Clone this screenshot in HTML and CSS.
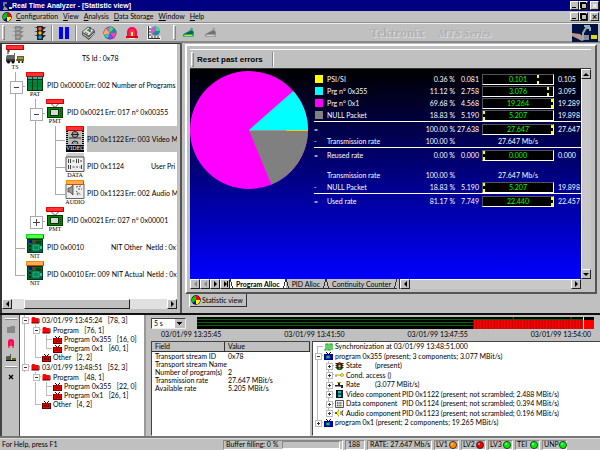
FILE: index.html
```html
<!DOCTYPE html>
<html lang="en">
<head>
<meta charset="utf-8">
<title>Real Time Analyzer - [Statistic view]</title>
<link rel="stylesheet" href="styles.css">
</head>
<body>
<svg class="defs" aria-hidden="true">
  <symbol id="wheel" viewBox="0 0 10 10"><circle cx="5" cy="5" r="4.7" fill="#000"/><path d="M5 5V.8A4.2 4.2 0 0 1 9.2 5z" fill="#f00"/><path d="M5 5H9.2A4.2 4.2 0 0 1 5 9.200z" fill="#ff0"/><path d="M5 5V9.200A4.200 4.200 0 0 1 2 8z" fill="#00f"/><path d="M5 5L2 8A4.200 4.200 0 0 1 5 .8z" fill="#0c0"/></symbol>
  <symbol id="folder" viewBox="0 0 8 8"><path d="M0 2L1 1H3L4 2H7V7H0z" fill="#f00"/><path d="M0 7H7.500V2.500" fill="none" stroke="#500" stroke-width="1"/></symbol>
  <symbol id="redtv" viewBox="0 0 9 8"><path d="M2 0L4.500 2.500L7 0" fill="none" stroke="#300"/><path d="M0 2H9V8H0z" fill="#600"/><path d="M1 2.500H8V7H1z" fill="#e00"/><path d="M2 3.500H5.500V6H2z" fill="#800"/><path d="M6.500 3.500V6" stroke="#400"/></symbol>
  <symbol id="bluetv" viewBox="0 0 9 8"><path d="M2 0L4.500 2.500L7 0" fill="none" stroke="#000"/><path d="M0 2H9V8H0z" fill="#008"/><path d="M1 3H8V7H1z" fill="#00c"/><path d="M2 3.500H6V6.500H2z" fill="#088"/><path d="M3 4.200H5V5.800H3z" fill="#3d3"/></symbol>
  <symbol id="pmt" viewBox="0 0 20 19"><path d="M6.500 5L10 8.500L13.500 5" fill="#fff" stroke="#555"/><path d="M2 8H18V19H2z" fill="#030"/><path d="M3 9H17V18H3z" fill="#080"/><path d="M5 10H14V17H5z" fill="#030"/><path d="M6 11H13V16H6z" fill="#d8d8d8"/><path d="M15.500 10V17" stroke="#040" stroke-dasharray="1 1"/></symbol>
  <symbol id="pat" viewBox="0 0 20 19"><path d="M2 5H18V19H2z" fill="#030"/><path d="M3 5H17V7H3z" fill="#0cc"/><path d="M3 8H17V18H3z" fill="#084"/><path d="M7.500 5V19M12.500 5V19" stroke="#030"/><path d="M3 11H17M3 14H17" stroke="#052" stroke-width=".5"/></symbol>
  <symbol id="nit" viewBox="0 0 20 19"><path d="M2 5H18V19H2z" fill="#032"/><path d="M3 6H17V18H3z" fill="#063"/><path d="M8 11H14V16H8z" fill="#085" stroke="#3ba" stroke-width=".8"/><path d="M4 6H7V9H4z" fill="#00c"/><path d="M8 6H10V8H8z" fill="#f00"/><path d="M11 7H16V10H11z" fill="#041"/><path d="M4 11H6V13H4zM4 15H6V17H4z" fill="#021"/><path d="M15 12H17V15H15z" fill="#4b8"/></symbol>
  <symbol id="dish" viewBox="0 0 12 12"><path d="M1 7L5 5L8 3L10 5V7z" fill="#065"/><path d="M8 1L6 5L10 3z" fill="#4a8"/><path d="M1 7H10V9H1z" fill="#084"/><path d="M2 8H9" stroke="#af5"/></symbol>
  <symbol id="light" viewBox="0 0 12 14"><path d="M0 1H12L9 4zM0 5H12L9 8zM0 9H12L9 12z"/><path d="M3 0H9V14H3z"/></symbol>
  <symbol id="led" viewBox="0 0 8 8"><circle cx="4" cy="4" r="3.600" stroke="#222" stroke-width=".8"/><circle cx="3" cy="3" r="1" fill="#fff" opacity=".6"/></symbol>
</svg>

<header class="titlebar">
  <svg class="ico" viewBox="0 0 10 10"><path d="M1 1H5V3H3V5H1z" fill="#777"/><path d="M2 5L5 7L6 9H1z" fill="#998"/><path d="M7 6H10V8H7z" fill="#ee0"/></svg>
  <h1>Real Time Analyzer - [Statistic view]</h1>
  <div class="winbtns"><button class="btn min" aria-label="Minimize"></button><button class="btn res" aria-label="Restore"></button><button class="btn cls" aria-label="Close">×</button></div>
</header>
<nav class="menubar">
  <svg class="ico"><use href="#wheel"/></svg>
  <a href="#"><u>C</u>onfiguration</a><a href="#"><u>V</u>iew</a><a href="#"><u>A</u>nalysis</a><a href="#"><u>D</u>ata Storage</a><a href="#"><u>W</u>indow</a><a href="#"><u>H</u>elp</a>
  <div class="winbtns"><button class="btn min" aria-label="Minimize view"></button><button class="btn res" aria-label="Restore view"></button><button class="btn cls" aria-label="Close view">×</button></div>
</nav>
<div class="toolbar">
  <span class="grip"></span>
  <button class="tool" aria-label="Stop"><svg viewBox="0 0 12 14" fill="#888"><use href="#light"/><path d="M4.500 2H7.500V4H4.500zM4.500 6H7.500V8H4.500zM4.500 10H7.500V12H4.500z" fill="#aaa"/></svg></button>
  <button class="tool" aria-label="Start"><svg viewBox="0 0 12 14" fill="#222"><use href="#light"/><circle cx="6" cy="2.800" r="1.700" fill="#f53"/><circle cx="6" cy="7" r="1.700" fill="#fb0"/><circle cx="6" cy="11.200" r="1.700" fill="#0af"/></svg></button>
  <span class="sep"></span>
  <button class="tool" aria-label="Pause"><svg viewBox="0 0 12 14"><path d="M1 1H5V13H1zM7 1H11V13H7z" fill="#00f"/></svg></button>
  <span class="sep"></span>
  <button class="tool" aria-label="Report"><svg viewBox="0 0 14 14"><path d="M1 9L8 14L14 7V4L8 10L1 6z" fill="#555"/><path d="M1 6L7 1L13 4L8 10z" fill="#ddd" stroke="#444" stroke-width=".8"/><path d="M4 6L7 8M6 4L10 6M7 3L9 6" stroke="#384"/><path d="M9 1V5" stroke="#222"/><path d="M2 8L8 12L13 7" fill="none" stroke="#eee" stroke-width=".7"/></svg></button>
  <button class="tool" aria-label="Statistics"><svg viewBox="0 0 14 14"><circle cx="7" cy="7" r="6.500" fill="#345"/><path d="M7 7V1A6 6 0 0 1 11 2.500z" fill="#4d8"/><path d="M7 7L11 2.500A6 6 0 0 1 13 7z" fill="#28a"/><path d="M7 7H13A6 6 0 0 1 10.500 12z" fill="#f4a"/><path d="M7 7L10.500 12A6 6 0 0 1 5 12.600z" fill="#93f"/><path d="M7 7L5 12.600A6 6 0 0 1 1.300 9z" fill="#2cc"/><path d="M7 7L1.300 9A6 6 0 0 1 3 2.500z" fill="#fa6"/><path d="M7 7L3 2.500A6 6 0 0 1 7 1z" fill="#c6c"/></svg></button>
  <button class="tool" aria-label="Alarm"><svg viewBox="0 0 14 14"><path d="M2 11V6A5 5 0 0 1 12 6V11z" fill="#f06"/><path d="M4 10V6A3 3 0 0 1 10 6V10z" fill="#f33"/><path d="M6 6H8V10H6z" fill="#ff8"/><path d="M1 10H13V12H1z" fill="#d00"/><path d="M4 12.500H10" stroke="#eee"/></svg></button>
  <button class="tool" aria-label="Graph"><svg viewBox="0 0 14 14"><path d="M0 0H4V10H14V14H0z" fill="#eee"/><path d="M1.500 0V12.500H13" fill="none" stroke="#333"/><path d="M2 3H4M2 6H4M2 9H4M5 12V10M8 12V10M11 12V10" stroke="#333"/><circle cx="8.500" cy="5" r="4.500" fill="#28a"/><path d="M8.500 5V.5A4.500 4.500 0 0 1 13 5z" fill="#4d8"/><path d="M8.500 5L5 8A4.500 4.500 0 0 1 5 2z" fill="#e5b"/><path d="M8.500 5L5 2A4.500 4.500 0 0 1 8.500 .5z" fill="#96f"/></svg></button>
  <span class="grip wide"></span>
  <button class="tool" aria-label="Connect"><svg><use href="#dish"/></svg></button>
  <button class="tool off" aria-label="Disconnect"><svg><use href="#dish"/></svg></button>
  <span class="brand">Tektronix</span><span class="brand series">MTS Series</span>
  <svg class="logo" viewBox="0 0 26 18"><path d="M0 0H26V18H0z" fill="#014"/><path d="M0 9L8 10L14 15L10 17L0 12z" fill="#b98"/><path d="M11 16V9L14 4H18V7M18 2H12" fill="none" stroke="#9aa" stroke-width="2"/><path d="M12 11H17V16H12z" fill="#889"/><path d="M19 11H25V15H19z" fill="#dd1"/></svg>
</div>

<main class="work">
  <section class="streams">
    <ul class="pids">
      <li><span class="node"><i class="bar red"></i><svg viewBox="0 0 20 19"><path d="M2 10H9V8H10V17H1V12z" fill="#666"/><path d="M3 5V9M3 6H5M1 15H10" stroke="#111"/><path d="M11 15H13" stroke="#000"/><path d="M12 11H19V16H12z" fill="#660"/><path d="M13 12H18V14H13z" fill="#996"/><circle cx="3.500" cy="17" r="1.500"/><circle cx="8" cy="17" r="1.500"/><circle cx="14" cy="17" r="1"/><circle cx="17.500" cy="17" r="1"/></svg><b>TS</b></span><span class="pid ts">TS Id : 0x78</span></li>
      <li><i class="c t x"></i><span class="node"><i class="bar red"></i><svg><use href="#pat"/></svg><b>PAT</b></span><span class="pid">PID 0x0000</span><span>Err: 002</span><span>Number of Programs : 00</span></li>
      <li><i class="c v"></i><i class="c t x"></i><span class="node"><i class="bar red"></i><svg><use href="#pmt"/></svg><b>PMT</b></span><span class="pid">PID 0x0021</span><span>Err: 017</span><span>n° 0x00355</span></li>
      <li><i class="c v"></i><i class="c v"></i><i class="c t"></i><span class="node"><i class="bar red"></i><svg viewBox="0 0 20 19"><path d="M1 5H19V19H1z" fill="#bbb"/><path d="M2 5V19M18 5V19" stroke="#000" stroke-width="2" stroke-dasharray="1 1"/><path d="M4 12H16" stroke="#333"/><circle cx="10" cy="8.500" r="3" fill="#999" stroke="#222"/><path d="M7 18A3 3 0 0 1 13 18" fill="#999" stroke="#222"/><path d="M6 8.500H14" stroke="#222"/></svg><b class="inv">VIDEO</b></span><span class="sel"><span class="pid">PID 0x1122</span><span>Err: 003</span><span class="kind">Video M</span></span></li>
      <li><i class="c v"></i><i class="c v"></i><i class="c t"></i><span class="node"><svg viewBox="0 0 20 19"><path d="M1 2L3 0H19V18H1z" fill="#ccc"/><path d="M1 4H19V18.500H1z" fill="#eee" stroke="#555"/><path d="M3.500 6V10M5.500 6V10M7.500 8H9.500M11.500 6V10M13.500 6V10M15 8H17M3.500 12V16M5.500 12V16M7.500 14H9.500M11 14H13M14.500 14H15.500M16.500 12V16" stroke="#444"/></svg><b>DATA</b></span><span class="pid">PID 0x1124</span><span></span><span class="kind">User Pri</span></li>
      <li><i class="c v"></i><i class="c v"></i><i class="c l"></i><span class="node"><i class="bar org"></i><svg viewBox="0 0 20 19"><path d="M1 4H19V18.500H1z" fill="#eee" stroke="#666"/><path d="M3 8H5L8 5V15L5 12H3z" fill="#999" stroke="#333" stroke-width=".7"/><path d="M11 7L16 6M11 11L16 15M13 9H17M12 13L13 16" stroke="#555" stroke-dasharray="2 1"/></svg><b>AUDIO</b></span><span class="pid">PID 0x1123</span><span>Err: 002</span><span class="kind">Audio M</span></li>
      <li><i class="c v"></i><i class="c l x plus"></i><span class="node"><i class="bar red"></i><svg><use href="#pmt"/></svg><b>PMT</b></span><span class="pid">PID 0x0021</span><span>Err: 027</span><span>n° 0x00001</span></li>
      <li><i class="c t"></i><span class="node"><i class="bar grn"></i><svg><use href="#nit"/></svg><b>NIT</b></span><span class="pid">PID 0x0010</span><span></span><span class="net">NIT Other</span><span>NetId : 0x1</span></li>
      <li><i class="c l"></i><span class="node"><i class="bar org"></i><svg><use href="#nit"/></svg><b>NIT</b></span><span class="pid">PID 0x0010</span><span>Err: 009</span><span class="net">NIT Actual</span><span>NetId : 0x1</span></li>
    </ul>
    <div class="hscroll"><button class="btn la" aria-label="Scroll left"></button><span class="track"><i class="thumb"></i></span><button class="btn ra" aria-label="Scroll right"></button></div>
  </section>

  <section class="stat">
    <div class="mdi">
      <div class="actions"><span class="grip"></span><button class="reset">Reset past errors</button></div>
      <div class="view">
        <div class="canvas">
          <svg class="pie" viewBox="0 0 118 118"><circle cx="59" cy="59" r="59" fill="#f0f"/><path d="M59 59L81.300 113.600A59 59 0 0 0 118 59z" fill="#808080"/><path d="M59 59H118A59 59 0 0 0 103.300 20z" fill="#0ff"/><path d="M59 59.500H97" stroke="#999"/><path d="M96 59.500H118" stroke="#fc0"/></svg>
          <table class="rates">
            <colgroup><col class="c1"><col><col class="c3"><col class="c4"><col class="c5"><col class="c6"></colgroup>
            <tbody>
              <tr><td><i class="sw yel"></i></td><th>PSI/SI</th><td>0.36 %</td><td>0.081</td><td><span class="gauge g80">0.101</span></td><td>0.105</td></tr>
              <tr><td><i class="sw cya"></i></td><th>Prg n° 0x355</th><td>11.12 %</td><td>2.758</td><td><span class="gauge g93">3.076</span></td><td>3.095</td></tr>
              <tr><td><i class="sw mag"></i></td><th>Prg n° 0x1</th><td>69.68 %</td><td>4.568</td><td><span class="gauge g100">19.264</span></td><td>19.289</td></tr>
              <tr><td><i class="sw gry"></i></td><th>NULL Packet</th><td>18.83 %</td><td>5.190</td><td><span class="gauge g0">5.207</span></td><td>19.898</td></tr>
            </tbody>
            <tbody>
              <tr><td>=</td><th></th><td>100.00 %</td><td>27.638</td><td><span class="gauge g100">27.647</span></td><td>27.647</td></tr>
              <tr><td>-</td><th>Transmission rate</th><td>100.00 %</td><td></td><td class="mid">27.647 Mb/s</td><td></td></tr>
            </tbody>
            <tbody>
              <tr><td>=</td><th>Reused rate</th><td>0.00 %</td><td>0.000</td><td><span class="gauge g0">0.000</span></td><td>0.000</td></tr>
              <tr class="gap"><td></td><th>Transmission rate</th><td>100.00 %</td><td></td><td class="mid">27.647 Mb/s</td><td></td></tr>
              <tr><td>-</td><th>NULL Packet</th><td>18.83 %</td><td>5.190</td><td><span class="gauge g0">5.207</span></td><td>19.898</td></tr>
            </tbody>
            <tbody>
              <tr><td>=</td><th>Used rate</th><td>81.17 %</td><td>7.749</td><td><span class="gauge g100">22.440</span></td><td>22.457</td></tr>
            </tbody>
          </table>
        </div>
        <div class="vscroll"><button class="btn ua" aria-label="Scroll up"></button><span class="track"></span><button class="btn da" aria-label="Scroll down"></button></div>
      </div>
      <div class="sheets">
        <button class="btn la dim" aria-label="First sheet"></button><button class="btn la dim" aria-label="Previous sheet"></button><button class="btn ra" aria-label="Next sheet"></button><button class="btn ra last" aria-label="Last sheet"></button>
        <div class="tabs"><a href="#" class="on">Program Alloc</a><a href="#">PID Alloc</a><a href="#">Continuity Counter</a></div>
        <div class="hscroll"><button class="btn la" aria-label="Scroll sheet left"></button><span class="track"></span><button class="btn ra" aria-label="Scroll sheet right"></button></div>
      </div>
    </div>
    <a href="#" class="viewtab"><svg class="ico"><use href="#wheel"/></svg>Statistic view</a>
  </section>
</main>

<section class="history">
  <div class="side">
    <i class="rule"></i>
    <button aria-label="Open log"><svg viewBox="0 0 10 10"><path d="M1 3H4L5 2H9V9H1z" fill="#888"/></svg></button>
    <button aria-label="Alarm log"><svg viewBox="0 0 10 10"><path d="M2 8V4A3 3 0 0 1 8 4V8z" fill="#f06"/><path d="M4 8V4H6V8z" fill="#f33"/><path d="M2 9H4M6 9H8" stroke="#d00"/></svg></button>
    <button aria-label="Train log"><svg viewBox="0 0 10 10"><path d="M1 4H4V2H5V8H0V5z" fill="#555"/><path d="M6 6H10V8H6z" fill="#660"/><path d="M0 8.500H10" stroke="#000"/></svg></button>
    <i class="rule"></i>
    <button aria-label="Clear"><svg viewBox="0 0 10 10"><path d="M3 3L7 7M7 3L3 7" stroke="#000" stroke-width="1.300"/></svg></button>
  </div>
  <ul class="tree log">
    <li class="p"><i class="e box"></i><svg><use href="#folder"/></svg>03/01/99 13:45:24&nbsp; &nbsp;[78, 3]</li>
    <li class="p"><i class="e v"></i><i class="e box l"></i><svg><use href="#folder"/></svg>Program&nbsp; &nbsp;[76, 1]</li>
    <li><i class="e v"></i><i class="e v"></i><i class="e t"></i><svg><use href="#redtv"/></svg>Program 0x355&nbsp; &nbsp;[16, 0]</li>
    <li><i class="e v"></i><i class="e v"></i><i class="e l"></i><svg><use href="#redtv"/></svg>Program 0x1&nbsp; &nbsp;[60, 1]</li>
    <li><i class="e v"></i><i class="e l"></i><svg><use href="#redtv"/></svg>Other&nbsp; &nbsp;[2, 2]</li>
    <li class="p"><i class="e box"></i><svg><use href="#folder"/></svg>03/01/99 13:48:51&nbsp; &nbsp;[52, 3]</li>
    <li class="p"><i class="e"></i><i class="e box l"></i><svg><use href="#folder"/></svg>Program&nbsp; &nbsp;[48, 1]</li>
    <li><i class="e"></i><i class="e v"></i><i class="e t"></i><svg><use href="#redtv"/></svg>Program 0x355&nbsp; &nbsp;[22, 0]</li>
    <li><i class="e"></i><i class="e v"></i><i class="e l"></i><svg><use href="#redtv"/></svg>Program 0x1&nbsp; &nbsp;[26, 1]</li>
    <li><i class="e"></i><i class="e l"></i><svg><use href="#redtv"/></svg>Other&nbsp; &nbsp;[4, 2]</li>
  </ul>
  <div class="detail">
    <div class="timeline">
      <select aria-label="Interval"><option>5 s</option></select>
      <div class="chart">
        <svg viewBox="0 0 398 12" preserveAspectRatio="none"><path d="M0 0H398V12H0z"/><path d="M0 2.500H387M0 5.500H277M0 8.500H277" stroke="#060"/><path d="M277 3H387V12H277z" fill="#a00"/><path d="M277.500 7.500H387" stroke="#f00" stroke-width="9" stroke-dasharray="2 1"/><path d="M317 0V3M375 0V3" stroke="#f00"/><path d="M388 3H398V12H388z" fill="#f00"/><path d="M387.500 0V12" stroke="#fff"/></svg>
        <div class="times"><span>03/01/99 13:35:45</span><span>03/01/99 13:41:50</span><span>03/01/99 13:47:55</span><span>03/01/99 13:54:00</span></div>
      </div>
    </div>
    <div class="panes">
      <div class="well">
        <table class="fields">
          <thead><tr><th>Field</th><th>Value</th></tr></thead>
          <tbody>
            <tr><td>Transport stream ID</td><td>0x78</td></tr>
            <tr><td>Transport stream Name</td><td></td></tr>
            <tr><td>Number of program(s)</td><td>2</td></tr>
            <tr><td>Transmission rate</td><td>27.647 MBit/s</td></tr>
            <tr><td>Available rate</td><td>5.205 MBit/s</td></tr>
          </tbody>
        </table>
      </div>
      <ul class="tree well">
        <li><i class="e t first"></i><svg viewBox="0 0 9 8"><path d="M0 7H2V1H4V7H6V1H8V7" fill="none" stroke="#0a0" stroke-width="1.200"/></svg>Synchronization at 03/01/99 13:48:51.000</li>
        <li class="p"><i class="e box"></i><svg><use href="#bluetv"/></svg>program 0x355 (present; 3 components; 3.077 MBit/s)</li>
        <li><i class="e v"></i><i class="e box add"></i><svg viewBox="0 0 9 8"><path d="M0 1H9L7 3H9L7 5H9L6 8H3L0 5H2L0 3H2z" fill="#222"/><path d="M3.500 0H5.500V2.500H3.500z" fill="#f00"/><path d="M3.500 3H5.500V5H3.500z" fill="#fc0"/><path d="M3.500 5.500H5.500V7.500H3.500z" fill="#0c0"/></svg><span class="k">State</span><span>(present)</span></li>
        <li class="p"><i class="e v"></i><i class="e box add"></i><svg viewBox="0 0 9 8"><path d="M0 4H6M1 4V6" stroke="#aa0" stroke-width="1.200"/><circle cx="7" cy="4" r="1.500" fill="#ee4" stroke="#880" stroke-width=".6"/></svg>Cond. access ()</li>
        <li><i class="e v"></i><i class="e box add"></i><svg viewBox="0 0 9 8"><path d="M0 4H3V2H5V4H8V7H6V5.500H0z" fill="#222"/><path d="M2 1.500H6" stroke="#aa0"/></svg><span class="k">Rate</span><span>(3.077 MBit/s)</span></li>
        <li class="p"><i class="e v"></i><i class="e box add"></i><svg viewBox="0 0 9 8"><path d="M1 0H8V8H1z" fill="#111"/><path d="M3 1H6V3.500H3zM3 4.500H6V7H3z" fill="#0cc"/></svg><span class="k long">Video component</span><span>PID 0x1122 (present; not scrambled; 2.488 MBit/s)</span></li>
        <li><i class="e v"></i><i class="e box add"></i><svg viewBox="0 0 9 8"><path d="M.5.5H8.500V7.500H.5z" fill="#eee" stroke="#555"/><path d="M2 3H7M2 5.500H7" stroke="#444" stroke-width="1.500" stroke-dasharray="1 .6"/></svg><span class="k long">Data component</span><span>PID 0x1124 (present; not scrambled; 0.394 MBit/s)</span></li>
        <li class="p"><i class="e v"></i><i class="e box add l"></i><svg viewBox="0 0 9 8"><path d="M0 3H2L4 0V8L2 5H0z" fill="#660"/><path d="M2 3L4 1V7L2 5z" fill="#ee0"/><path d="M6 2V6M8 1L7 4L8 7" fill="none" stroke="#555"/></svg><span class="k long">Audio component</span><span>PID 0x1123 (present; not scrambled; 0.196 MBit/s)</span></li>
        <li><i class="e box add l"></i><svg><use href="#bluetv"/></svg>program 0x1 (present; 2 components; 19.265 MBit/s)</li>
      </ul>
    </div>
  </div>
</section>

<footer class="status">
  <span class="help">For Help, press F1</span>
  <span class="cell buf">Buffer filling: 0 %<i class="meter"></i></span>
  <span class="cell size">188</span>
  <span class="cell rate">RATE: 27.647 Mb/s</span>
  <span class="cell lv">LV1<svg fill="#f80"><use href="#led"/></svg></span>
  <span class="cell lv">LV2<svg fill="#e00"><use href="#led"/></svg></span>
  <span class="cell lv">LV3<svg fill="#0e0"><use href="#led"/></svg></span>
  <span class="cell lv">TEI<svg fill="#0e0"><use href="#led"/></svg></span>
  <span class="cell lv">UNP<svg fill="#0e0"><use href="#led"/></svg></span>
</footer>
</body>
</html>
```
FILE: styles.css
```css
* { box-sizing: border-box; }
body {
  margin: 0; height: 100vh; display: flex; flex-direction: column; overflow: hidden;
  background: #c0c0c0; color: #000;
  font: 7px/9px Lato, "Liberation Sans", sans-serif;
  white-space: nowrap;
}
ul { list-style: none; margin: 0; padding: 0; }
a { color: inherit; text-decoration: none; }
button { font: inherit; color: inherit; background: none; border: 0; padding: 0; margin: 0; }
svg { display: block; flex: none; }
i { font-style: normal; flex: none; }
table { border-spacing: 0; table-layout: fixed; width: 100%; }
th, td { padding: 0; font-weight: normal; text-align: left; }
.defs { position: absolute; width: 0; height: 0; }
.ico { width: 10px; height: 10px; }

/* raised push buttons */
.btn {
  position: relative; flex: none; width: 9px; height: 9px; background: #c0c0c0;
  border: 1px solid; border-color: #fff #222 #222 #fff;
}
.la::before, .ra::before, .ua::before, .da::before { content: ""; position: absolute; inset: 0; margin: auto; width: 0; height: 0; border: 3px solid transparent; }
.la::before { border-width: 3px 3px 3px 0; border-right-color: #000; }
.ra::before { border-width: 3px 0 3px 3px; border-left-color: #000; }
.ua::before { border-width: 0 3px 3px; border-bottom-color: #000; }
.da::before { border-width: 3px 3px 0; border-top-color: #000; }
.dim::before { border-right-color: #888; }
.last::after { content: ""; position: absolute; right: 1px; top: 1px; width: 1px; height: 6px; background: #000; }

.titlebar, .menubar { display: flex; align-items: center; height: 11px; padding-right: 1px; flex: none; }
.titlebar { background: #000080; color: #fff; padding-left: 2px; }
h1 { font: bold 7px/11px "Liberation Sans", sans-serif; margin: 0; }
.winbtns { display: flex; margin-left: auto; }
.cls { margin-left: 2px; font-weight: bold; line-height: 7px; font-size: 9px; }
.min::before { content: ""; position: absolute; left: 1px; bottom: 1px; width: 4px; height: 1px; background: #000; }
.res::before, .res::after { content: ""; position: absolute; width: 4px; height: 4px; border: 1px solid #000; background: #c0c0c0; }
.res::before { right: 1px; top: 0; }
.res::after { left: 1px; bottom: 0; }
.menubar { padding-left: 2px; gap: 5px; border-bottom: 1px solid #909090; height: 12px; }
.menubar .ico { margin-right: -1px; }

.toolbar { display: flex; align-items: center; height: 19px; flex: none; border-top: 1px solid #eee; border-bottom: 1px solid #888; padding: 0 2px; }
.grip { width: 3px; height: 15px; flex: none; border: 1px solid; border-color: #fff #888 #888 #fff; margin-right: 2px; }
.wide { margin: 0 2px 0 8px; }
.sep { width: 2px; height: 16px; border-left: 1px solid #888; border-right: 1px solid #fff; }
.tool { width: 22px; display: grid; place-items: center; flex: none; }
.tool svg { width: 14px; height: 14px; }
.off { filter: grayscale(1) opacity(.7); }
.brand { font: bold 13px/16px "Liberation Serif", serif; color: #b0b0b0; text-shadow: 1px 1px #ddd; margin-left: 148px; }
.brand.series { font-style: italic; font-size: 11px; margin: 0 auto 0 14px; }
.logo { width: 26px; height: 18px; }

/* upper work area */
.work { flex: 1; min-height: 0; display: grid; grid-template-columns: 180px 1fr; border-top: 1px solid #888; }
.streams { display: flex; flex-direction: column; min-width: 0; min-height: 0; border: solid #333; border-width: 1px 0 0 2px; padding: 0 3px 4px 0; }
.pids { flex: 1; background: #fff; padding: 1px 0 0 3px; overflow: hidden; min-height: 0; }
.pids li { display: flex; height: 27px; overflow: hidden; line-height: 26px; }
.pids li > span + span, .sel span + span { margin-left: 2px; }
.pids .pid { width: 36px; flex: none; }
.pids .pid ~ span { flex: none; min-width: 24px; }
.pids li .pid.ts { margin-left: 57px; }
.pids .net { width: 33px; }
.c { width: 20px; height: 27px; position: relative; background: linear-gradient(#aaa, #aaa) 10px 0/1px 100% no-repeat; }
.c.t { background: linear-gradient(#aaa, #aaa) 10px 0/1px 100% no-repeat, linear-gradient(#aaa, #aaa) 10px 14px/10px 1px no-repeat; }
.c.l { background: linear-gradient(#aaa, #aaa) 10px 0/1px 14px no-repeat, linear-gradient(#aaa, #aaa) 10px 14px/10px 1px no-repeat; }
.x::before { content: ""; position: absolute; left: 5px; top: 9px; width: 11px; height: 11px; border: 1px solid #aaa; background: linear-gradient(#444, #444) center/5px 1px no-repeat #fff; }
.plus::before { background: linear-gradient(#444, #444) center/7px 1px no-repeat, linear-gradient(#444, #444) center/1px 7px no-repeat #fff; }
.node { width: 20px; height: 27px; flex: none; position: relative; text-align: center; }
.node svg { width: 20px; height: 19px; }
.node b { display: block; font: 6px/7px "Liberation Serif", serif; }
.node b.inv { background: #000; color: #fff; margin: 0 1px; }
.bar { position: absolute; left: 1px; right: 1px; top: 0; height: 5px; border-radius: 1px; border: 1px solid; }
.red { background: #f33; border-color: #f00 #b00 #b00 #f00; }
.org { background: #fa5; border-color: #f80 #b50 #b50 #f80; }
.grn { background: #5f5; border-color: #0e0 #080 #080 #0e0; }
.sel { flex: 1; background: #c0c0c0; display: flex; height: 26px; overflow: hidden; }
.pids li > span.sel { margin-left: 2px; }
.hscroll { display: flex; height: 10px; flex: none; }
.hscroll .btn, .sheets > .btn { height: 10px; width: 10px; }
.track { flex: 1; background: #e0e0e0; display: block; }
.thumb { display: block; height: 100%; margin: 0 24% 0 8%; background: #c0c0c0; border: 1px solid; border-color: #fff #222 #222 #fff; }

.stat { border-left: 2px solid #555; padding: 1px 3px 6px 3px; display: flex; flex-direction: column; align-items: flex-start; min-width: 0; min-height: 0; }
.mdi { align-self: stretch; flex: 1; min-height: 0; display: flex; flex-direction: column; border: solid; border-width: 2px; border-color: #fff #555 #555 #fff; padding: 3px 4px 2px 3px; }
.actions { display: flex; align-items: center; height: 19px; flex: none; border-top: 1px solid #fff; }
.actions .grip { margin: 0 3px 0 1px; }
.reset { font: bold 8px/15px "Liberation Sans", sans-serif; padding-right: 9px; border-right: 1px solid #888; box-shadow: 1px 0 #fff; }
.view { display: flex; flex: 1; min-height: 0; border-top: 1px solid #333; }
.canvas { flex: 1; display: flex; justify-content: space-between; align-items: flex-start; background: linear-gradient(#000, #00f); color: #fff; min-width: 0; }
.pie { width: 118px; height: 118px; margin-top: 2px; }
.rates { width: 267px; margin-top: 4px; }
.c1 { width: 13px; } .c3 { width: 30px; } .c4 { width: 24px; } .c5 { width: 75px; } .c6 { width: 27px; }
.rates td, .rates th { height: 12px; line-height: 11px; vertical-align: bottom; }
.rates td:nth-child(3), .rates td:nth-child(4) { text-align: right; }
.rates td:nth-child(5) { padding-left: 3px; }
.rates td:nth-child(6) { padding-left: 4px; }
.rates td.mid { text-align: center; }
.rates tbody + tbody tr:first-child > * { border-top: 1px solid #fff; height: 14px; }
.rates .gap > * { height: 20px; }
.sw { display: block; width: 8px; height: 8px; margin: 0 0 2px 1px; }
.yel { background: #ff0; } .cya { background: #0ff; } .mag { background: #f0f; } .gry { background: #808080; }
.gauge { display: block; height: 11px; line-height: 9px; border: 1px solid; border-color: #555 #fff #fff #555; text-align: center; color: #0f0; background: #000 no-repeat; background-image: linear-gradient(#ff0, #ff0), linear-gradient(#ff0, #ff0); background-size: 2px 3px, 2px 3px; }
.g80 { background-position: 80% 0, 80% 100%; }
.g93 { background-position: 94% 0, 94% 100%; }
.g100 { background-position: 100% 0, 100% 100%; }
.g0 { background-position: 0 0, 0 100%; }
.vscroll { display: flex; flex-direction: column; width: 10px; flex: none; }
.vscroll .btn { width: 10px; height: 10px; }
.vscroll .track { background: #c8c8c8; border-left: 1px solid #fff; }
.sheets { display: flex; height: 11px; flex: none; padding-right: 10px; }
.tabs { display: flex; line-height: 10px; }
.tabs a { padding: 0 6px; border-bottom: 1px solid #333; height: 10px; background: linear-gradient(75deg, transparent 2px, #333 2px 3px, transparent 3px), linear-gradient(-75deg, transparent 2px, #333 2px 3px, transparent 3px); }
.tabs .on { background-color: #fff; font-weight: bold; }
.sheets .hscroll { flex: 1; border-left: 1px solid #333; margin-left: 2px; }
.sheets .track { background: #c8c8c8; border-top: 1px solid #fff; }
.viewtab { display: flex; align-items: center; gap: 1px; height: 13px; margin-left: 5px; padding: 0 3px 0 1px; border: solid #333; border-width: 0 1px 1px 0; box-shadow: -1px 0 #fff; }

/* history area */
.history { height: 125px; flex: none; display: grid; grid-template-columns: 20px 124px 1fr; border-top: 2px solid #111; border-bottom: 2px solid #777; }
.side { display: flex; flex-direction: column; align-items: center; gap: 4px; padding-top: 3px; border-left: 2px solid #444; border-right: 1px solid #444; }
.side svg { width: 10px; height: 10px; }
.side .rule { width: 12px; height: 2px; border-top: 1px solid #fff; border-bottom: 1px solid #888; }
.tree { background: #fff; }
.tree li { display: flex; align-items: center; height: 9px; line-height: 9px; }
.tree li.p { height: 10px; }
.tree svg { width: 9px; height: 8px; margin-right: 2px; }
.e { width: 11px; height: 100%; position: relative; background: linear-gradient(#bbb, #bbb) 4px 0/1px 100% no-repeat; }
.e:not(.v, .t, .l, .box) { background: none; }
.e.t, .e.box { background: linear-gradient(#bbb, #bbb) 4px 0/1px 100% no-repeat, linear-gradient(#bbb, #bbb) 4px 4px/6px 1px no-repeat; }
.e.l { background: linear-gradient(#bbb, #bbb) 4px 0/1px 5px no-repeat, linear-gradient(#bbb, #bbb) 4px 4px/6px 1px no-repeat; }
.e.first { background: linear-gradient(#bbb, #bbb) 4px 4px/1px 100% no-repeat, linear-gradient(#bbb, #bbb) 4px 4px/6px 1px no-repeat; }
.box::before { content: ""; position: absolute; left: 2px; top: 2px; width: 5px; height: 5px; border: 1px solid #bbb; background: linear-gradient(#333, #333) center/3px 1px no-repeat #fff; }
.add::before { background: linear-gradient(#333, #333) center/3px 1px no-repeat, linear-gradient(#333, #333) center/1px 3px no-repeat #fff; }
.k { width: 29px; flex: none; }
.k.long { width: 56px; }
.detail { display: flex; flex-direction: column; padding: 0 0 0 5px; border-left: 2px solid #999; min-width: 0; }
.timeline { display: flex; gap: 11px; padding: 2px 6px 0 0; height: 26px; align-items: flex-start; flex: none; }
select { width: 35px; height: 11px; margin: 1px 0 0; padding: 0 0 0 2px; font: inherit; color: #000; border: 1px solid; border-color: #444 #eee #eee #444; border-radius: 0; appearance: none; background: linear-gradient(#000, #000) right 3px top 3px/5px 1px no-repeat, linear-gradient(#000, #000) right 4px top 4px/3px 1px no-repeat, linear-gradient(#000, #000) right 5px top 5px/1px 1px no-repeat, linear-gradient(#c0c0c0, #c0c0c0) right/10px 100% no-repeat #fff; }
.chart { flex: 1; min-width: 0; }
.chart svg { width: 100%; height: 12px; }
.times { display: flex; justify-content: space-between; margin: 1px 3px 0 -36px; }
.panes { flex: 1; display: grid; grid-template-columns: 159px 1fr; gap: 2px; min-height: 0; }
.well { border: solid; border-width: 1px 0 1px 1px; border-color: #444 #fff #fff #444; background: #fff; overflow: hidden; }
.fields th { background: #c0c0c0; height: 10px; line-height: 9px; padding-left: 3px; border: solid; border-width: 0 1px 1px 0; border-color: #333; }
.fields th:first-child { width: 73px; }
.fields td { height: 8px; line-height: 8px; padding-left: 3px; }

.status { height: 12px; flex: none; display: flex; align-items: center; gap: 2px; padding: 0 33px 0 2px; border-top: 1px solid #ddd; }
.help { flex: 1; }
.cell { display: flex; align-items: center; justify-content: space-between; height: 10px; padding: 0 2px; border: 1px solid; border-color: #888 #fff #fff #888; flex: none; }
.cell svg { width: 8px; height: 8px; }
.buf { width: 120px; }
.meter { width: 58px; height: 8px; border: 1px solid; border-color: #888 #fff #fff #888; }
.size { width: 20px; }
.rate { width: 65px; }
.lv { width: 25px; padding: 0 1px; }
```
